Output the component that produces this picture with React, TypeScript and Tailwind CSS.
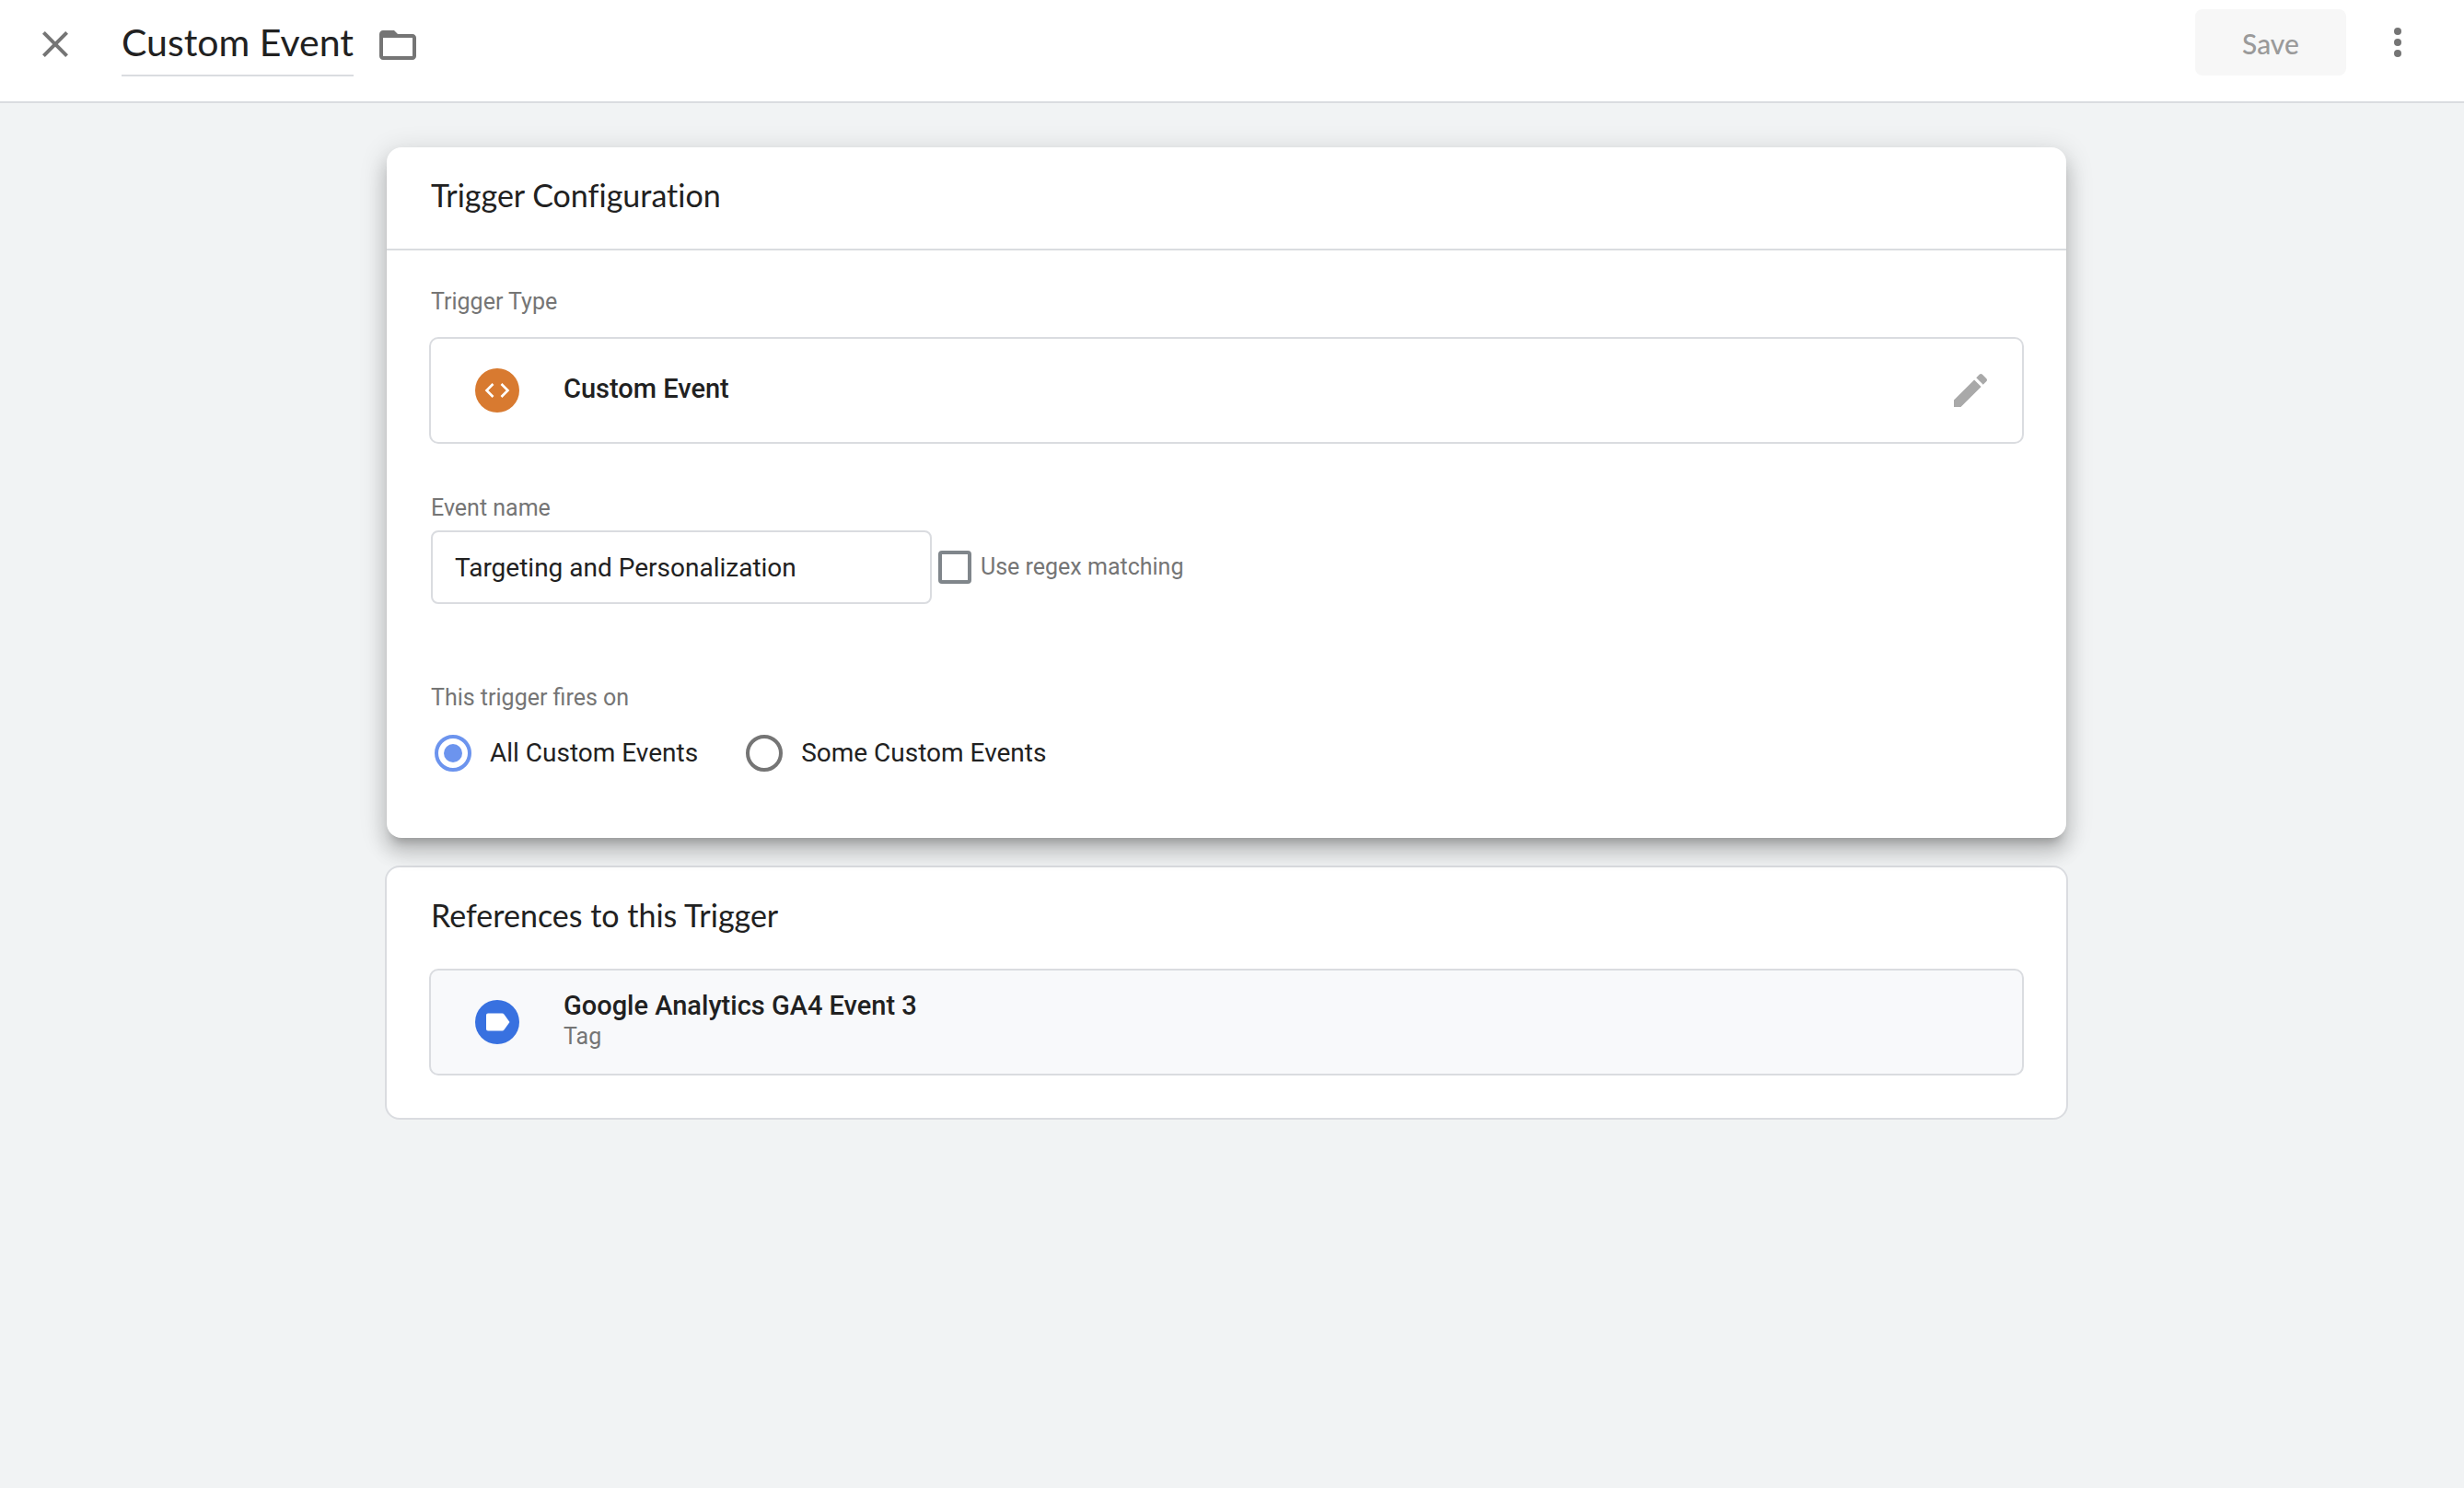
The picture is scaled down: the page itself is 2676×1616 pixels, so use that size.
import React, { useState } from 'react';

function CloseIcon() {
  return (
    <svg className="size-12" viewBox="0 0 24 24" fill="currentColor" aria-hidden="true">
      <path d="M19 6.41 17.59 5 12 10.59 6.41 5 5 6.41 10.59 12 5 17.59 6.41 19 12 13.41 17.59 19 19 17.59 13.41 12z" />
    </svg>
  );
}

function FolderIcon() {
  return (
    <svg className="size-12" viewBox="0 0 24 24" fill="currentColor" aria-hidden="true">
      <path d="M20 6h-8l-2-2H4c-1.1 0-1.99.9-1.99 2L2 18c0 1.1.9 2 2 2h16c1.1 0 2-.9 2-2V8c0-1.1-.9-2-2-2zm0 12H4V8h16v10z" />
    </svg>
  );
}

function MoreIcon() {
  return (
    <svg className="size-12" viewBox="0 0 24 24" fill="currentColor" aria-hidden="true">
      <circle cx="12" cy="6" r="2" />
      <circle cx="12" cy="12" r="2" />
      <circle cx="12" cy="18" r="2" />
    </svg>
  );
}

function PencilIcon() {
  return (
    <svg className="size-12" viewBox="0 0 24 24" fill="currentColor" aria-hidden="true">
      <path d="M3 17.25V21h3.75L17.81 9.94l-3.75-3.75L3 17.25zM20.71 7.04c.39-.39.39-1.02 0-1.41l-2.34-2.34c-.39-.39-1.02-.39-1.41 0l-1.83 1.83 3.75 3.75 1.83-1.83z" />
    </svg>
  );
}

function CustomEventIcon() {
  return (
    <svg className="size-12 shrink-0" viewBox="0 0 48 48" aria-hidden="true">
      <circle cx="24" cy="24" r="24" fill="#d87a30" />
      <path d="M19.5 17 12.5 24l7 7M28.5 17l7 7-7 7" fill="none" stroke="#fff" strokeWidth="2.6" />
    </svg>
  );
}

function TagIcon() {
  return (
    <svg className="size-12 shrink-0" viewBox="0 0 48 48" aria-hidden="true">
      <circle cx="24" cy="24" r="24" fill="#3871e0" />
      <path
        d="M14 14.5h15.5c.8 0 1.4.4 1.9 1L37.500 24l-6.100 8.500c-.5.600-1.100 1-1.900 1H14c-1.100 0-2-.9-2-2v-15c0-1.100.9-2 2-2z"
        fill="#fff"
      />
    </svg>
  );
}

const firesOn = [
  { value: 'all', label: 'All Custom Events' },
  { value: 'some', label: 'Some Custom Events' },
];

export default function App() {
  const [name, setName] = useState('Custom Event');
  const [eventName, setEventName] = useState('Targeting and Personalization');
  const [regex, setRegex] = useState(false);
  const [fires, setFires] = useState('all');

  return (
    <div className="min-h-screen bg-[#f1f3f4] font-[Roboto,sans-serif] text-[#212121]">
      <header className="flex items-start justify-between border-b-2 border-[#dadce0] bg-white pr-12 pl-9 pt-2.5 pb-[27px]">
        <div className="flex items-start">
          <button type="button" aria-label="Close" className="mt-3.5 text-[#757575]">
            <CloseIcon />
          </button>
          <input
            aria-label="Trigger name"
            className="ml-12 h-[73px] field-sizing-content border-b-2 border-[#dadce0] font-[Lato,sans-serif] text-[41px] outline-none"
            value={name}
            onChange={(e) => setName(e.target.value)}
          />
          <button type="button" aria-label="Move to folder" className="mt-[15px] ml-6 text-[#757575]">
            <FolderIcon />
          </button>
        </div>
        <div className="flex items-center">
          <button
            type="button"
            disabled
            className="h-[72px] w-[164px] rounded-lg bg-[#f7f7f7] pt-0.5 font-[Lato,sans-serif] text-[30px] font-medium text-[#9a9a9a]"
          >
            Save
          </button>
          <button type="button" aria-label="More actions" className="ml-8 text-[#757575]">
            <MoreIcon />
          </button>
        </div>
      </header>

      <main className="mt-12 pr-3">
        <div className="mx-auto w-full max-w-[1828px]">
          {/* trigger configuration */}
          <section className="relative z-10 mx-0.5 rounded-2xl bg-white shadow-[0_10px_10px_-6px_rgba(0,0,0,0.2),0_16px_20px_2px_rgba(0,0,0,0.14),0_6px_28px_4px_rgba(0,0,0,0.12)]">
            <div className="border-b-2 border-[#dadce0] px-12 pt-8 pb-[38px]">
              <h2 className="font-[Lato,sans-serif] text-[34px] leading-10 [font-variant-ligatures:none]">
                Trigger Configuration
              </h2>
            </div>
            <div className="px-[46px] pt-10 pb-[72px]">
              <p className="pl-0.5 text-[25px] leading-8 text-[#757575]">Trigger Type</p>
              <button
                type="button"
                className="mt-[22px] flex h-[116px] w-full items-center rounded-[10px] border-2 border-[#dadce0] pr-8 pl-12 text-left"
              >
                <CustomEventIcon />
                <span className="ml-12 flex-1 pb-1 text-[29px] leading-9 font-medium">Custom Event</span>
                <span className="text-[#a9a9a9]">
                  <PencilIcon />
                </span>
              </button>

              <label htmlFor="event-name" className="mt-[54px] block pl-0.5 text-[25px] leading-8 text-[#757575]">
                Event name
              </label>
              <div className="mt-2 flex items-center pl-0.5">
                <input
                  id="event-name"
                  type="text"
                  className="h-20 w-[544px] rounded-lg border-2 border-[#dadce0] px-6 text-[28px] outline-none"
                  value={eventName}
                  onChange={(e) => setEventName(e.target.value)}
                />
                <label className="ml-[7px] flex items-center gap-2.5 text-[25px] leading-8 text-[#757575]">
                  <input
                    type="checkbox"
                    className="size-9 appearance-none rounded-sm border-4 border-[#80868b] checked:bg-[#80868b]"
                    checked={regex}
                    onChange={(e) => setRegex(e.target.checked)}
                  />
                  Use regex matching
                </label>
              </div>

              <fieldset className="mt-[86px]">
                <legend className="pl-0.5 text-[25px] leading-8 text-[#757575]">This trigger fires on</legend>
                <div className="mt-6 flex gap-[52px] pl-1.5">
                  {firesOn.map((option) => (
                    <label key={option.value} className="flex items-center gap-5 text-[28px] leading-10">
                      <input
                        type="radio"
                        name="fires-on"
                        className="size-10 appearance-none rounded-full border-4 border-[#757575] bg-clip-content p-1.5 checked:border-[#6c94ee] checked:bg-[#6c94ee]"
                        value={option.value}
                        checked={fires === option.value}
                        onChange={() => setFires(option.value)}
                      />
                      {option.label}
                    </label>
                  ))}
                </div>
              </fieldset>
            </div>
          </section>

          {/* references */}
          <section className="mt-[30px] rounded-2xl border-2 border-[#dadce0] bg-white px-[46px] pt-8 pb-[46px]">
            <h2 className="pl-0.5 font-[Lato,sans-serif] text-[34px] leading-10">References to this Trigger</h2>
            <a
              href="#tag"
              className="mt-[38px] flex h-[116px] items-center rounded-[10px] border-2 border-[#dadce0] bg-[#f8f9fb] px-12"
            >
              <TagIcon />
              <span className="ml-12 flex flex-col pb-1">
                <span className="text-[29px] leading-9 font-medium">Google Analytics GA4 Event 3</span>
                <span className="text-[25px] leading-8 text-[#757575]">Tag</span>
              </span>
            </a>
          </section>
        </div>
      </main>
    </div>
  );
}
